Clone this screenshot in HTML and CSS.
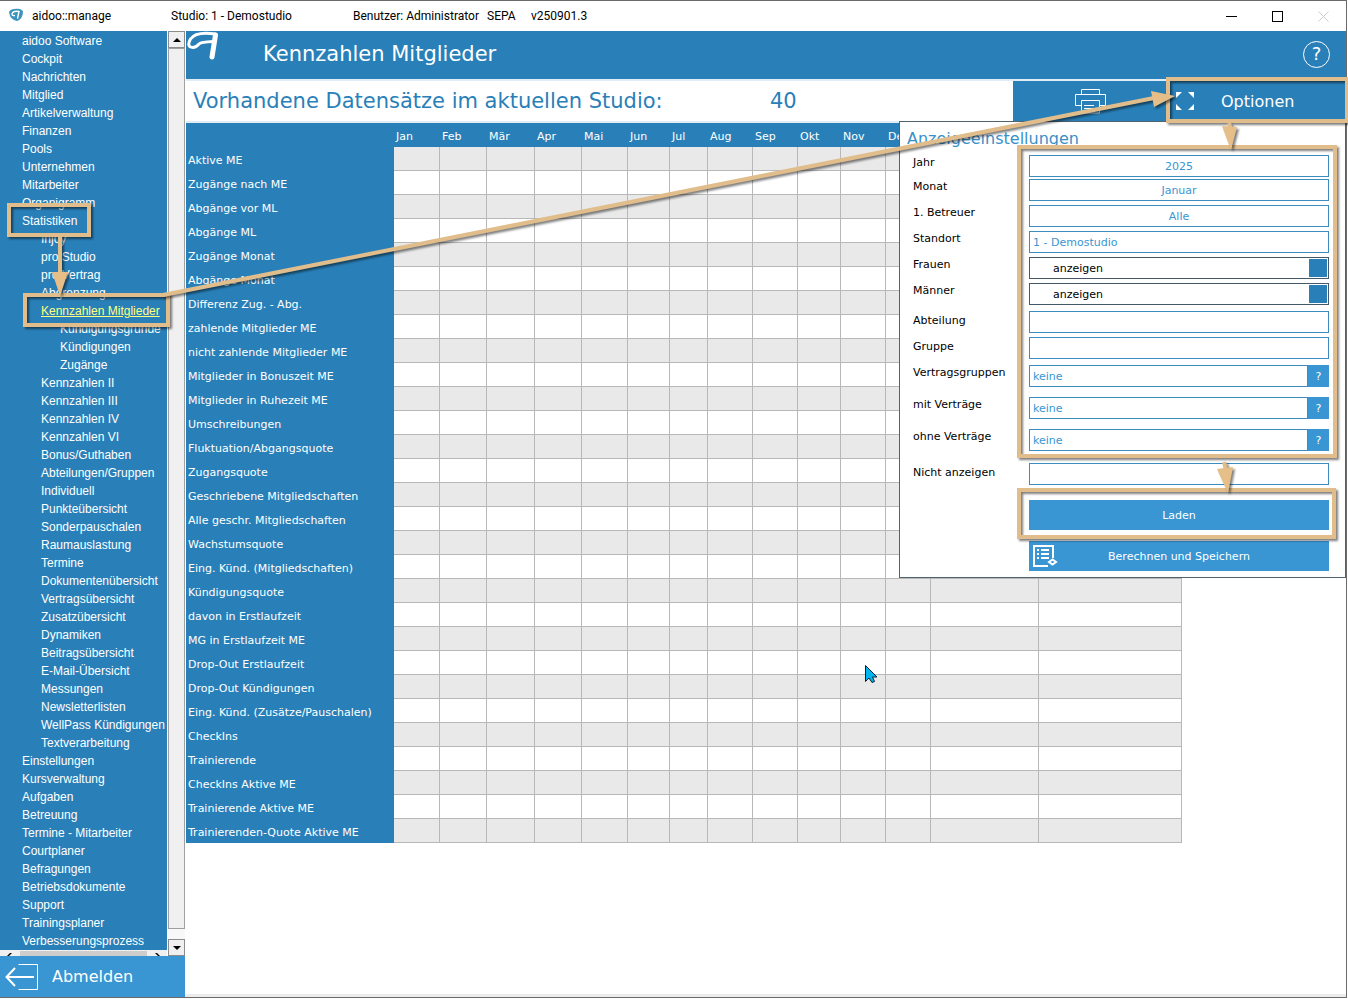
FILE: index.html
```html
<!DOCTYPE html>
<html lang="de">
<head>
  <meta charset="UTF-8" />
  <title>aidoo::manage</title>
  <link rel="stylesheet" href="styles.css">
</head>
<body>
  <div class="window">
    <header class="titlebar">
      <svg class="app-icon" viewBox="0 0 16 16">
        <path d="M1 4 Q3 0 12 1 L15 3 Q15 11 9 13 Q2 12 1 4Z" fill="#3b94bd" />
        <path d="M9.500 10.500L11 3.500Q5 2.500 4 6Q4 8 7 7.500" fill="none" stroke="#fff" stroke-width="1.4" />
      </svg>
      <div class="title-text">
        <span>aidoo::manage</span>
        <span>Studio: 1 - Demostudio</span>
        <span>Benutzer: Administrator</span>
        <span>SEPA</span>
        <span>v250901.3</span>
      </div>
      <div class="window-buttons">
        <button type="button" aria-label="Minimieren"><svg viewBox="0 0 11 11"><path d="M0 5.5H11" stroke="#000" /></svg></button>
        <button type="button" aria-label="Maximieren"><svg viewBox="0 0 11 11"><rect x=".5" y=".5" width="10" height="10" fill="none" stroke="#000" /></svg></button>
        <button type="button" aria-label="Schließen"><svg viewBox="0 0 11 11"><path d="M.5 .5L10.5 10.5M10.5 .5L.5 10.5" stroke="#ccc" /></svg></button>
      </div>
    </header>

    <div class="body">
      <!-- Navigation -->
      <aside class="sidebar">
        <div class="tree-wrap">
          <div class="tree-col">
            <nav class="tree">
              <ul id="tree"></ul>
            </nav>
            <div class="hscroll">
              <svg viewBox="0 0 8 3"><path d="M2 3L5 0H7L4 3Z" /></svg>
              <div class="hthumb"></div>
              <svg viewBox="0 0 8 3"><path d="M6 3L3 0H1L4 3Z" /></svg>
            </div>
          </div>
          <div class="vscroll">
            <button type="button" aria-label="Nach oben"><svg viewBox="0 0 8 4"><path d="M0 4L4 0L8 4Z" /></svg></button>
            <div class="vtrack"><div class="vthumb"></div></div>
            <button type="button" aria-label="Nach unten"><svg viewBox="0 0 8 4"><path d="M0 0L4 4L8 0Z" /></svg></button>
          </div>
        </div>
        <button type="button" class="logout">
          <svg viewBox="0 0 34 28"><path d="M13.500 1.500H32.500V26.500H13.500" /><path class="arrow" d="M29 14H2M10 5L1.500 14L10 23" /></svg>
          Abmelden
        </button>
      </aside>

      <!-- Content -->
      <main class="main">
        <div class="page-head">
          <svg class="logo" viewBox="0 0 32 30"><path d="M29.500 3Q10 0 4.500 8Q0 16 7 16.500Q10 16.500 13 13Q15 11 27 10.500" /><path class="stem" d="M29.500 4L26 26" /></svg>
          <h1>Kennzahlen Mitglieder</h1>
          <button type="button" class="help">?</button>
        </div>
        <div class="toolbar">
          <h2>Vorhandene Datensätze im aktuellen Studio:</h2>
          <span class="count">40</span>
          <button type="button" class="print" aria-label="Drucken">
            <svg viewBox="0 0 32 26"><path d="M7.500 6V1.500H25.500V6M7 17.500H1.500V6.500H31.500V17.500H26M7.500 25V12.500H25.500V25ZM10 17.500H20M10 20.500H22" /></svg>
          </button>
          <button type="button" class="options">
            <svg viewBox="0 0 18 18"><path d="M0 0H6L0 6ZM18 0V6L12 0ZM0 18V12L6 18ZM18 18H12L18 12Z" /></svg>
            <span>Optionen</span>
          </button>
        </div>

        <table class="stats">
          <colgroup>
            <col class="c-name"><col class="c-46"><col class="c-47"><col class="c-48"><col class="c-47"><col class="c-46"><col class="c-42"><col class="c-38"><col class="c-45"><col class="c-45"><col class="c-43"><col class="c-45"><col class="c-45"><col class="c-108"><col class="c-143">
          </colgroup>
          <thead>
            <tr><th></th><th>Jan</th><th>Feb</th><th>Mär</th><th>Apr</th><th>Mai</th><th>Jun</th><th>Jul</th><th>Aug</th><th>Sep</th><th>Okt</th><th>Nov</th><th>Dez</th><th></th><th></th></tr>
          </thead>
          <tbody id="stats"></tbody>
        </table>

        <form class="panel">
          <h3>Anzeigeeinstellungen</h3>
          <div class="row first"><label for="jahr">Jahr</label><input id="jahr" class="centered" value="2025"></div>
          <div class="row tight"><label for="monat">Monat</label><input id="monat" class="centered" value="Januar"></div>
          <div class="row"><label for="betreuer">1. Betreuer</label><input id="betreuer" class="centered" value="Alle"></div>
          <div class="row"><label for="standort">Standort</label><input id="standort" value="1 - Demostudio"></div>
          <div class="row"><label for="frauen">Frauen</label><select id="frauen"><option>anzeigen</option></select></div>
          <div class="row"><label for="maenner">Männer</label><select id="maenner"><option>anzeigen</option></select></div>
          <div class="row group low"><label for="abteilung">Abteilung</label><input id="abteilung"></div>
          <div class="row low"><label for="gruppe">Gruppe</label><input id="gruppe"></div>
          <div class="row group"><label for="vgruppen">Vertragsgruppen</label><input id="vgruppen" value="keine"><button type="button" class="pick">?</button></div>
          <div class="row wide"><label for="mit">mit Verträge</label><input id="mit" value="keine"><button type="button" class="pick">?</button></div>
          <div class="row wide"><label for="ohne">ohne Verträge</label><input id="ohne" value="keine"><button type="button" class="pick">?</button></div>
          <div class="row last low"><label for="nicht">Nicht anzeigen</label><input id="nicht"></div>
          <div class="actions">
            <button type="button">Laden</button>
            <button type="button">
              <svg viewBox="0 0 26 24"><path d="M16 22H2V2H21V14" /><path d="M5 6H7M9 6H17M5 10H7M9 10H17M5 14H7M9 14H17" /><path d="M17 18L20.500 15.500L24 18L20.500 20.500Z" /></svg>
              Berechnen und Speichern
            </button>
          </div>
        </form>
      </main>
    </div>

    <!-- Markings drawn over the window -->
    <svg class="marks" width="1348" height="997">
      <g class="mark-boxes">
        <rect x="9" y="205" width="80" height="30" />
        <rect x="25" y="295" width="143" height="30" />
        <rect x="1168" y="79" width="179" height="42" />
        <rect x="1019" y="147" width="316" height="309" />
        <rect x="1019" y="490" width="315" height="47" />
      </g>
      <g class="mark-arrows">
        <path d="M60 236V276M163 295L1154 98M1229 123L1231 130M1224 462L1226 470" />
        <path class="tip" d="M52 272H68L60 296ZM1151 91L1175 96L1154 107ZM1222 126L1237 127L1231 150ZM1217 469L1233 467L1228 493Z" />
      </g>
      <path class="cursor" d="M865.500 665.500V681.500L869 678L872 682.500L874.500 681.500L872.500 677H877Z" />
    </svg>
  </div>

  <script>
    // [level, label]
    const items = [
      [0, 'aidoo Software'], [0, 'Cockpit'], [0, 'Nachrichten'], [0, 'Mitglied'],
      [0, 'Artikelverwaltung'], [0, 'Finanzen'], [0, 'Pools'], [0, 'Unternehmen'],
      [0, 'Mitarbeiter'], [0, 'Organigramm'], [0, 'Statistiken'],
      [1, 'Injoy'], [1, 'pro Studio'], [1, 'pro Vertrag'], [1, 'Abgrenzung'],
      [1, 'Kennzahlen Mitglieder'],
      [2, 'Kündigungsgründe'], [2, 'Kündigungen'], [2, 'Zugänge'],
      [1, 'Kennzahlen II'], [1, 'Kennzahlen III'], [1, 'Kennzahlen IV'], [1, 'Kennzahlen VI'],
      [1, 'Bonus/Guthaben'], [1, 'Abteilungen/Gruppen'], [1, 'Individuell'],
      [1, 'Punkteübersicht'], [1, 'Sonderpauschalen'], [1, 'Raumauslastung'], [1, 'Termine'],
      [1, 'Dokumentenübersicht'], [1, 'Vertragsübersicht'], [1, 'Zusatzübersicht'],
      [1, 'Dynamiken'], [1, 'Beitragsübersicht'], [1, 'E-Mail-Übersicht'], [1, 'Messungen'],
      [1, 'Newsletterlisten'], [1, 'WellPass Kündigungen'], [1, 'Textverarbeitung'],
      [0, 'Einstellungen'], [0, 'Kursverwaltung'], [0, 'Aufgaben'], [0, 'Betreuung'],
      [0, 'Termine - Mitarbeiter'], [0, 'Courtplaner'], [0, 'Befragungen'],
      [0, 'Betriebsdokumente'], [0, 'Support'], [0, 'Trainingsplaner'], [0, 'Verbesserungsprozess']
    ];
    const tree = document.getElementById('tree');
    for (const [level, label] of items) {
      const li = document.createElement('li');
      const a = document.createElement('a');
      li.className = 'level-' + level;
      a.href = '#';
      a.textContent = label;
      if (label === 'Kennzahlen Mitglieder') a.className = 'active';
      li.appendChild(a);
      tree.appendChild(li);
    }

    const rows = [
      'Aktive ME', 'Zugänge nach ME', 'Abgänge vor ML', 'Abgänge ML', 'Zugänge Monat',
      'Abgänge Monat', 'Differenz Zug. - Abg.', 'zahlende Mitglieder ME',
      'nicht zahlende Mitglieder ME', 'Mitglieder in Bonuszeit ME', 'Mitglieder in Ruhezeit ME',
      'Umschreibungen', 'Fluktuation/Abgangsquote', 'Zugangsquote',
      'Geschriebene Mitgliedschaften', 'Alle geschr. Mitgliedschaften', 'Wachstumsquote',
      'Eing. Künd. (Mitgliedschaften)', 'Kündigungsquote', 'davon in Erstlaufzeit',
      'MG in Erstlaufzeit ME', 'Drop-Out Erstlaufzeit', 'Drop-Out Kündigungen',
      'Eing. Künd. (Zusätze/Pauschalen)', 'CheckIns', 'Trainierende', 'CheckIns Aktive ME',
      'Trainierende Aktive ME', 'Trainierenden-Quote Aktive ME'
    ];
    const stats = document.getElementById('stats');
    for (const name of rows) {
      const tr = stats.insertRow();
      const th = document.createElement('th');
      th.scope = 'row';
      th.textContent = name;
      tr.appendChild(th);
      for (let i = 0; i < 14; i++) tr.insertCell();
    }
  </script>
</body>
</html>
```
FILE: styles.css
```css
* {
  box-sizing: border-box;
}

body {
  margin: 0;
  background: #fff;
  font-family: Verdana, 'DejaVu Sans', sans-serif;
  font-size: 11px;
  color: #000;
}

button, input, select {
  margin: 0;
  padding: 0;
  border: 0;
  border-radius: 0;
  font: inherit;
  color: inherit;
  background: none;
}

h1, h2, h3 {
  margin: 0;
  font-weight: normal;
}

.window {
  position: relative;
  display: flex;
  flex-direction: column;
  min-height: calc(100vh - 1px);
  margin-right: 1px;
  border-top: 1px solid #6b6b6b;
  border-right: 1px solid #6b6b6b;
}

/* Title bar */
.titlebar {
  display: flex;
  align-items: center;
  height: 30px;
  padding-left: 8px;
  font-family: 'Segoe UI', Roboto, sans-serif;
  font-size: 12px;
}

.app-icon {
  width: 16px;
  height: 16px;
  margin-right: 8px;
}

.title-text {
  display: grid;
  grid-template-columns: 139px 182px 134px 44px auto;
  white-space: nowrap;
}

.window-buttons {
  display: flex;
  margin-left: auto;
}

.window-buttons button {
  width: 46px;
  height: 30px;
}

.window-buttons svg {
  display: block;
  width: 11px;
  height: 11px;
  margin: 0 auto;
}

.body {
  display: flex;
  flex: 1;
  border-bottom: 1px solid #6b6b6b;
}

/* Sidebar */
.sidebar {
  display: flex;
  flex-direction: column;
  width: 185px;
  flex: none;
}

.tree-wrap {
  display: flex;
  flex: 1;
}

.tree-col {
  display: flex;
  flex-direction: column;
  width: 168px;
  border-right: 1px solid #fff;
}

.tree {
  flex: 1;
  overflow: hidden;
  background: #2980b9;
  font-family: Arial, 'Liberation Sans', sans-serif;
  font-size: 12px;
  line-height: 18px;
}

.tree ul {
  margin: 0;
  padding: 1px 0 0 22px;
  list-style: none;
}

.tree li {
  height: 18px;
  white-space: nowrap;
}

.tree a {
  color: #fff;
  text-decoration: none;
}

.tree a.active {
  color: #ffff80;
  text-decoration: underline;
}

.level-1 {
  padding-left: 19px;
}

.level-2 {
  padding-left: 38px;
}

.hscroll {
  display: flex;
  align-items: flex-end;
  justify-content: space-between;
  height: 6px;
  padding: 0 5px;
  background: #f0f0f0;
}

.hscroll svg {
  width: 8px;
  height: 3px;
}

.hthumb {
  width: 127px;
  height: 5px;
  background: #cdcdcd;
}

.vscroll {
  display: flex;
  flex-direction: column;
  width: 17px;
}

.vscroll button {
  height: 17px;
  border: 1px solid #8c8c8c;
  background: #f0f0f0;
}

.vscroll svg {
  display: block;
  width: 8px;
  height: 4px;
  margin: 0 auto;
}

.vtrack {
  flex: 1;
  padding-bottom: 10px;
  background: #f8f8f8;
}

.vthumb {
  height: 100%;
  border: 1px solid #a0a0a0;
  background: #f0f0f0;
}

.logout {
  display: flex;
  align-items: center;
  gap: 13px;
  height: 41px;
  padding-left: 5px;
  background: #3996d3;
  color: #fff;
  font-size: 16px;
}

.logout svg {
  width: 34px;
  height: 28px;
  fill: none;
  stroke: #fff;
}

.logout .arrow {
  stroke-width: 2;
}

/* Main */
.main {
  position: relative;
  flex: 1;
  padding-left: 1px;
  border-bottom: 3px solid #ececec;
}

.page-head {
  display: flex;
  align-items: center;
  height: 48px;
  padding: 0 16px 2px 0;
  background: #2980b9;
  color: #fff;
}

.logo {
  align-self: flex-start;
  width: 32px;
  height: 30px;
  margin-right: 45px;
  fill: none;
  stroke: #fff;
  stroke-width: 3;
}

.logo .stem {
  stroke-width: 5;
  stroke-linecap: round;
}

.page-head h1 {
  font-size: 21px;
}

.help {
  width: 27px;
  height: 27px;
  margin-left: auto;
  border: 1px solid #fff;
  border-radius: 50%;
  font-size: 18px;
  line-height: 24px;
}

.toolbar {
  display: flex;
  align-items: center;
  height: 44px;
  padding-left: 7px;
  border-top: 2px solid #e0edf6;
  border-bottom: 2px solid #e0edf6;
  color: #2980b9;
}

.toolbar h2,
.count {
  font-size: 21px;
}

.toolbar h2 {
  width: 577px;
}

.toolbar button {
  height: 40px;
  background: #2980b9;
  color: #fff;
}

.print {
  width: 153px;
  margin-left: auto;
}

.print svg {
  display: block;
  width: 32px;
  height: 26px;
  margin: 0 auto;
  fill: none;
  stroke: #fff;
}

.toolbar .options {
  display: flex;
  align-items: center;
  width: 180px;
  padding-left: 10px;
  font-size: 16px;
}

.options svg {
  width: 18px;
  height: 18px;
  margin-right: 27px;
  fill: #fff;
}

/* Table */
.stats {
  width: 996px;
  table-layout: fixed;
  border-collapse: separate;
  border-spacing: 0;
}

.c-name { width: 208px; }
.c-38 { width: 38px; }
.c-42 { width: 42px; }
.c-43 { width: 43px; }
.c-45 { width: 45px; }
.c-46 { width: 46px; }
.c-47 { width: 47px; }
.c-48 { width: 48px; }
.c-108 { width: 108px; }
.c-143 { width: 143px; }

.stats th {
  height: 24px;
  padding: 2px 2px 0;
  background: #2980b9;
  color: #fff;
  font-weight: normal;
  text-align: left;
  white-space: nowrap;
}

.stats td {
  height: 24px;
  padding: 0;
  border-right: 1px solid #b8b8b8;
  border-bottom: 1px solid #b8b8b8;
}

.stats tbody tr:nth-child(odd) td {
  background: #e9e9e9;
}

/* Options panel */
.panel {
  position: absolute;
  top: 90px;
  right: 0;
  width: 447px;
  padding: 0 16px 6px 13px;
  border: 1px solid #4f6470;
  background: #fff;
}

.panel h3 {
  margin-left: -6px;
  color: #3990c8;
  font-size: 16px;
  line-height: 33px;
}

.row {
  display: flex;
  height: 22px;
  margin-top: 4px;
}

.row.first { margin-top: 0; }
.row.tight { margin-top: 2px; }
.row.group { margin-top: 6px; }
.row.wide { margin-top: 10px; }
.row.last { margin-top: 12px; }

.row label {
  width: 116px;
  line-height: 16px;
}

.row.low label {
  line-height: 20px;
}

.row input,
.row select {
  flex: 1;
  min-width: 0;
  padding: 0 3px;
  border: 1px solid #3d8cc0;
  color: #3996d3;
}

.row .centered {
  text-align: center;
}

.row select {
  padding-left: 23px;
  appearance: none;
  border-color: #44586a;
  color: #000;
  background: linear-gradient(#2980b9, #2980b9) no-repeat right 1px center / 18px 18px;
}

.pick {
  width: 21px;
  background: #3996d3;
  color: #fff;
}

.actions {
  display: flex;
  flex-direction: column;
  gap: 11px;
  margin: 15px 0 0 116px;
}

.actions button {
  position: relative;
  height: 30px;
  background: #3996d3;
  color: #fff;
}

.actions svg {
  position: absolute;
  top: 3px;
  left: 3px;
  width: 26px;
  height: 24px;
  fill: none;
  stroke: #fff;
  stroke-width: 2;
}

/* Markings */
.marks {
  position: absolute;
  top: -1px;
  left: 0;
  pointer-events: none;
}

.mark-boxes,
.mark-arrows {
  fill: none;
  stroke: #e0bd8b;
  stroke-width: 4;
  filter: drop-shadow(2px 2px 1px rgba(0, 0, 0, 0.5));
}

.mark-arrows .tip {
  fill: #e6be87;
  stroke: none;
}

.cursor {
  fill: #00b4f0;
  stroke: #102030;
}
```
